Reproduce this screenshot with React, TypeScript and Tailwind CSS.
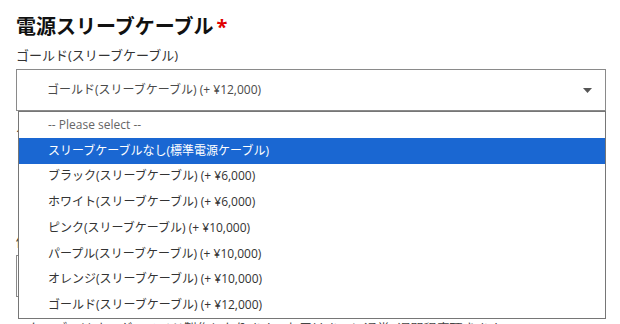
import React from "react";

const font = { fontFamily: '"Open Sans", "Noto Sans CJK JP", sans-serif' };

const options = [
  "スリーブケーブルなし(標準電源ケーブル)",
  "ブラック(スリーブケーブル) (+ ¥6,000)",
  "ホワイト(スリーブケーブル) (+ ¥6,000)",
  "ピンク(スリーブケーブル) (+ ¥10,000)",
  "パープル(スリーブケーブル) (+ ¥10,000)",
  "オレンジ(スリーブケーブル) (+ ¥10,000)",
  "ゴールド(スリーブケーブル) (+ ¥12,000)",
];

export default function App() {
  return (
    <div
      className="w-[620px] h-[324px] overflow-hidden bg-white pl-4 pr-[14px] pt-[13px]"
      style={font}
    >
      <h2 className="flex items-center text-[20px] leading-[28px] font-bold text-[#111]">
        電源スリーブケーブル
        <span className="ml-[3px] text-[#e00000]">*</span>
      </h2>
      <div className="mt-[4px] text-[13px] leading-[20px] text-[#333]">
        ゴールド(スリーブケーブル)
      </div>
      <div className="relative z-10 mt-[4px]">
        <div className="flex h-[42px] items-center justify-between border border-[#8a8a8a] bg-white pl-[30px] pr-[13px] text-[12px] text-[#4a4a4a]">
          <span>ゴールド(スリーブケーブル) (+ ¥12,000)</span>
          <svg width="9" height="6" viewBox="0 0 9 6" className="mt-[1px]">
            <path d="M0 0 H9 L4.5 5 Z" fill="#555" />
          </svg>
        </div>
        <div className="absolute left-[2px] right-0 top-full flex flex-col border border-[#767676] bg-white text-[12px]">
          <div className="flex h-[25.75px] items-center pl-[29px] text-[#666]">
            -- Please select --
          </div>
          {options.map((o, i) => (
            <div
              key={o}
              className={
                i === 0
                  ? "flex h-[25.75px] items-center pl-[29px] bg-[#1a67d2] text-white"
                  : "flex h-[25.75px] items-center pl-[29px] text-[#333]"
              }
            >
              {o}
            </div>
          ))}
        </div>
      </div>
      <div className="flex flex-col pt-[10px]">
        <div className="text-[13px] leading-[20px] text-[#333]">ケーブル長さ</div>
        <div className="mt-[90px] text-[13px] leading-[20px] text-[#333]">備考</div>
        <div className="mt-[4px] h-[42px] border border-[#8a8a8a]" />
        <div className="mt-[21px] text-[13px] leading-[20px] text-[#444]">
          ※ケーブルはオーダーメイド製作となります。お届けまでに通常2週間程度頂きます。
        </div>
      </div>
    </div>
  );
}
